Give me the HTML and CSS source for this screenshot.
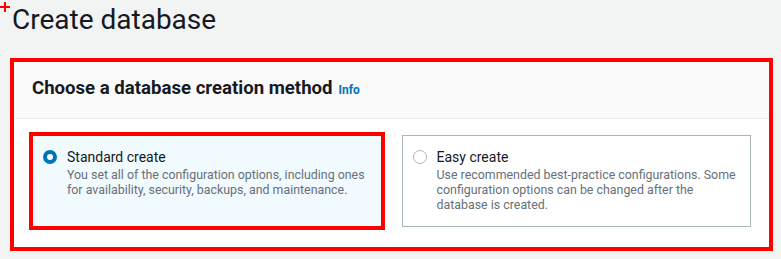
FILE: index.html
```html
<!DOCTYPE html>
<html lang="en">
<head>
<meta charset="utf-8">
<title>Create database</title>
<link rel="stylesheet" href="styles.css">
</head>
<body>
<span class="cross" aria-hidden="true"></span>
<h1 class="page-title">Create database</h1>
<section class="panel">
  <header class="panel-header">
    <h2 class="panel-title">Choose a database creation method</h2>
    <a class="info" href="#">Info</a>
  </header>
  <div class="panel-body">
    <label class="tile tile-selected">
      <span class="radio radio-on"></span>
      <span class="tile-text">
        <span class="tile-label">Standard create</span>
        <span class="tile-desc">You set all of the configuration options, including ones for availability, security, backups, and maintenance.</span>
      </span>
    </label>
    <label class="tile">
      <span class="radio"></span>
      <span class="tile-text">
        <span class="tile-label">Easy create</span>
        <span class="tile-desc">Use recommended best-practice configurations. Some configuration options can be changed after the database is created.</span>
      </span>
    </label>
  </div>
</section>
</body>
</html>
```
FILE: styles.css
```css
* { box-sizing: border-box; }
body {
  margin: 0;
  background: #f2f3f3;
  font-family: Roboto, "Noto Sans", sans-serif;
  color: #16191f;
  position: relative;
}
.cross {
  position: absolute;
  left: 0;
  top: 2px;
  width: 10px;
  height: 10px;
}
.cross::before, .cross::after {
  content: "";
  position: absolute;
  background: #f00;
}
.cross::before { left: 0; top: 4px; width: 10px; height: 2px; }
.cross::after { left: 4px; top: 0; width: 2px; height: 10px; }
.page-title {
  margin: 0;
  padding: 2px 0 0 12px;
  height: 58px;
  font-size: 28px;
  font-weight: 400;
  line-height: 36px;
  color: #16191f;
}
.panel {
  margin: 0 8px 0 10px;
  border: 4px solid #f00;
  background: #fff;
}
.panel-header {
  display: flex;
  align-items: baseline;
  gap: 6px;
  height: 57px;
  padding: 14px 18px 0;
  background: #fafafa;
  border-bottom: 1px solid #eaeded;
}
.panel-title {
  margin: 0;
  font-size: 18.6px;
  font-weight: 700;
  line-height: 24px;
}
.info {
  font-size: 12px;
  font-weight: 700;
  color: #0073bb;
  text-decoration: none;
}
.panel-body {
  display: grid;
  grid-template-columns: 1fr 1fr;
  gap: 20px;
  padding: 16px 18px 20px;
}
.tile {
  display: flex;
  gap: 10px;
  padding: 11px 10px 14px;
  border: 1px solid #aab7b8;
  background: #fff;
}
.tile-selected {
  background: #f1faff;
  border-color: #687078;
  outline: 4px solid #f00;
  outline-offset: -1px;
}
.radio {
  flex: none;
  width: 14px;
  height: 14px;
  margin-top: 3px;
  border-radius: 50%;
  border: 1.5px solid #aab7b8;
  background: #fff;
}
.radio-on {
  border: 4.5px solid #0073bb;
}
.tile-text {
  display: flex;
  flex-direction: column;
}
.tile-label {
  font-size: 14px;
  line-height: 20px;
  color: #16191f;
}
.tile-desc {
  font-size: 12.4px;
  line-height: 15px;
  color: #687078;
}
```
